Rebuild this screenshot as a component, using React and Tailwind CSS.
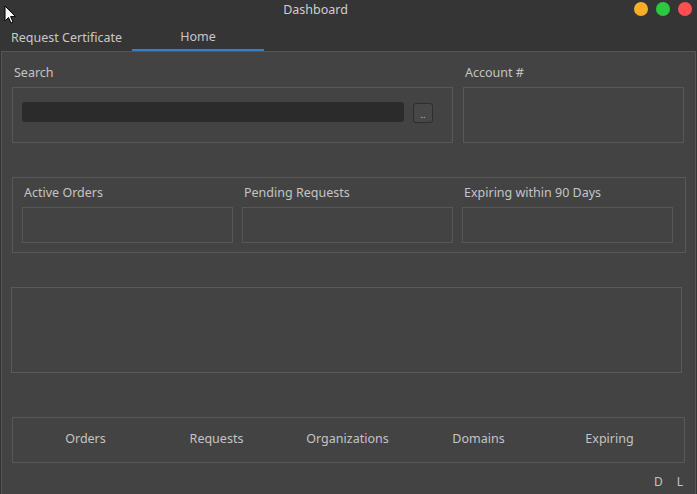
import React from "react";

const font = { fontFamily: '"Noto Sans", "Open Sans", sans-serif' };

const Cursor = () => (
  <svg className="absolute left-[4px] top-[5px]" width="13" height="19" viewBox="0 0 13 19">
    <path d="M1 1 L1 16 L4.5 12.5 L7 18 L9 17 L6.6 11.6 L11.5 11.6 Z" fill="#fff" stroke="#000" strokeWidth="1" />
  </svg>
);

const StatBox = ({ label }) => (
  <div className="flex flex-col w-[211px]">
    <div className="h-[29px] pl-[2px] pt-[6px] text-[12.5px] leading-[18px] text-[#c4c4c4]">{label}</div>
    <div className="h-[36px] border border-[#575757]" />
  </div>
);

export default function App() {
  return (
    <div style={font} className="relative w-[697px] h-[494px] bg-[#353535] overflow-hidden select-none">
      <Cursor />

      {/* title bar */}
      <div className="h-[20px] flex items-center justify-center text-[12.5px] text-[#cfcfcf] relative">
        <span className="ml-[-66px]">Dashboard</span>
        <div className="absolute right-[5px] top-[2px] flex gap-[8px]">
          <span className="w-[14px] h-[14px] rounded-full bg-[#fcad26]" />
          <span className="w-[14px] h-[14px] rounded-full bg-[#2bc93f]" />
          <span className="w-[14px] h-[14px] rounded-full bg-[#ff4f50]" />
        </div>
      </div>

      {/* tabs */}
      <div className="h-[31px] flex items-end text-[12.5px] text-[#c8c8c8]">
        <div className="w-[132px] h-full flex items-center pl-[11px] pt-[6px]">Request Certificate</div>
        <div className="w-[132px] h-full flex items-center justify-center pt-[6px] border-b-2 border-[#2f7fd6]">Home</div>
      </div>

      {/* content panel */}
      <div className="ml-[1px] mr-[1px] h-[443px] bg-[#434343] border-t border-x border-[#555555] pl-[10px] pt-[11px]">
        {/* row 1 */}
        <div className="flex gap-[10px]">
          <div className="flex flex-col w-[441px]">
            <div className="h-[24px] pt-[1px] pl-[2px] text-[12.5px] leading-[18px] text-[#c4c4c4]">Search</div>
            <div className="h-[56px] border border-[#585858] flex items-start pt-[14px] pl-[9px] pr-[19px] gap-[9px]">
              <div className="flex-1 h-[20px] rounded-[3px] bg-[#2b2b2b]" />
              <div className="mt-[1px] w-[20px] h-[20px] rounded-[3px] border border-[#2e2e2e] bg-[#474747] flex items-end justify-center pb-[3px] text-[9px] leading-none text-[#c8c8c8]">..</div>
            </div>
          </div>
          <div className="flex flex-col w-[221px]">
            <div className="h-[24px] pt-[1px] pl-[2px] text-[12.5px] leading-[18px] text-[#c4c4c4]">Account #</div>
            <div className="h-[56px] border border-[#585858]" />
          </div>
        </div>

        {/* row 2 */}
        <div className="mt-[34px] w-[674px] h-[76px] border border-[#585858] flex gap-[9px] pl-[9px]">
          <StatBox label="Active Orders" />
          <StatBox label="Pending Requests" />
          <StatBox label="Expiring within 90 Days" />
        </div>

        {/* big box */}
        <div className="mt-[34px] ml-[-1px] w-[671px] h-[86px] border border-[#5a5a5a]" />

        {/* bottom nav */}
        <div className="mt-[44px] w-[673px] h-[46px] border border-[#585858] flex pl-[7px] text-[12.5px] text-[#c4c4c4]">
          {["Orders", "Requests", "Organizations", "Domains", "Expiring"].map((t) => (
            <div key={t} className="w-[131px] flex items-center justify-center pb-[1px]">{t}</div>
          ))}
        </div>

        <div className="mt-[10px] flex justify-end gap-[14px] pr-[12px] text-[12px] text-[#c4c4c4]">
          <span>D</span>
          <span>L</span>
        </div>
      </div>
    </div>
  );
}
